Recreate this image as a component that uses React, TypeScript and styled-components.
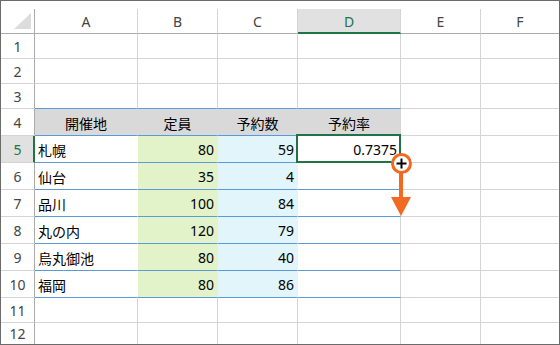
import { Fragment } from "react"
import styled, { createGlobalStyle } from "styled-components"

const GlobalStyle = createGlobalStyle`
	html, body {
		margin: 0;
		padding: 0;
		background: #ffffff;
		overflow: hidden;
	}
	* {
		box-sizing: border-box;
	}
`

const GRID = "#d4d4d4"
const HEAD_LINE = "#ababab"
const TABLE_LINE = "#5b9bd5"
const EXCEL_GREEN = "#217346"
const ORANGE = "#f26a22"

const Frame = styled.div`
	position: relative;
	width: 560px;
	height: 345px;
	border: 1px solid #6b6b6b;
	background: #ffffff;
	font-family: "Noto Sans", "Noto Sans CJK JP", sans-serif;
	font-size: 14px;
	color: #000000;
`

const Sheet = styled.div`
	display: grid;
	grid-template-columns: 34px 103px 80px 80px 103px 80px 78px;
	grid-template-rows: 8px 25px 25px 25px 25px repeat(7, 27px) 25px 21px;
`

const Spacer = styled.div`
	grid-column: 1 / -1;
`

const Corner = styled.div`
	display: flex;
	align-items: flex-end;
	justify-content: flex-end;
	padding: 0 3px 4px 0;
	border-right: 1px solid ${HEAD_LINE};
	border-bottom: 1px solid ${HEAD_LINE};
`

const CornerMark = styled.div`
	width: 17px;
	height: 16px;
	background: #dcdcdc;
	clip-path: polygon(100% 0, 100% 100%, 0 100%);
`

const ColHead = styled.div<{ $active?: boolean; $last?: boolean }>`
	display: flex;
	align-items: center;
	justify-content: center;
	color: ${(p) => (p.$active ? EXCEL_GREEN : "#444444")};
	background: ${(p) => (p.$active ? "#e1e1e1" : "#ffffff")};
	border-right: ${(p) => (p.$last ? "none" : `1px solid ${GRID}`)};
	border-bottom: ${(p) =>
		p.$active ? `2px solid ${EXCEL_GREEN}` : `1px solid ${HEAD_LINE}`};
	padding-top: ${(p) => (p.$active ? "1px" : "0")};
`

const RowHead = styled.div<{ $active?: boolean; $last?: boolean }>`
	display: flex;
	align-items: center;
	justify-content: center;
	color: ${(p) => (p.$active ? EXCEL_GREEN : "#444444")};
	background: ${(p) => (p.$active ? "#e1e1e1" : "#ffffff")};
	border-right: ${(p) =>
		p.$active ? `2px solid ${EXCEL_GREEN}` : `1px solid ${HEAD_LINE}`};
	border-bottom: ${(p) => (p.$last ? "none" : `1px solid ${GRID}`)};
	padding-left: ${(p) => (p.$active ? "1px" : "0")};
`

type Align = "left" | "center" | "right"

const justify: Record<Align, string> = {
	left: "flex-start",
	center: "center",
	right: "flex-end",
}

const Cell = styled.div<{
	$bg: string
	$right: string
	$bottom: string
	$align: Align
}>`
	position: relative;
	display: flex;
	align-items: center;
	justify-content: ${(p) => justify[p.$align]};
	padding: 1px 3px 0 3px;
	background: ${(p) => p.$bg};
	border-right: 1px solid ${(p) => p.$right};
	border-bottom: ${(p) => (p.$bottom === "none" ? "none" : `1px solid ${p.$bottom}`)};
	white-space: nowrap;
`

// active cell outline, drawn over the neighbouring grid lines
const Selection = styled.div`
	position: absolute;
	top: -2px;
	left: -2px;
	right: -1px;
	bottom: -1px;
	border: 2px solid ${EXCEL_GREEN};
	z-index: 1;
	pointer-events: none;
`

const Pointer = styled.svg`
	position: absolute;
	left: 387px;
	top: 149px;
	z-index: 2;
`

type Row = (string | number)[]

const columns = ["A", "B", "C", "D", "E", "F"]

const table: Row[] = [
	["開催地", "定員", "予約数", "予約率"],
	["札幌", 80, 59, "0.7375"],
	["仙台", 35, 4, ""],
	["品川", 100, 84, ""],
	["丸の内", 120, 79, ""],
	["烏丸御池", 80, 40, ""],
	["福岡", 80, 86, ""],
]

const fills = ["#ffffff", "#e2f2c9", "#e1f5fb", "#ffffff"]

function cellStyle(row: number, col: number) {
	const lastRow = row === 12
	const inTable = row >= 4 && row <= 10 && col < 4
	const aboveTable = row === 3 && col < 4
	let bg = "#ffffff"
	if (inTable) {
		bg = row === 4 ? "#d9d9d9" : fills[col]
	}
	const right = col === 5 ? bg : inTable && col < 3 ? bg : GRID
	const bottom = lastRow ? "none" : inTable || aboveTable ? TABLE_LINE : GRID
	return { bg, right, bottom }
}

function alignFor(row: number, col: number): Align {
	if (row === 4) return "center"
	return col === 0 ? "left" : "right"
}

export default function App() {
	const rows = Array.from({ length: 12 }, (_, i) => i + 1)

	return (
		<>
			<GlobalStyle />
			<Frame>
				<Sheet>
					<Spacer />
					<Corner>
						<CornerMark />
					</Corner>
					{columns.map((c, i) => (
						<ColHead key={c} $active={c === "D"} $last={i === columns.length - 1}>
							{c}
						</ColHead>
					))}
					{rows.map((r) => (
						<Fragment key={r}>
							<RowHead $active={r === 5} $last={r === 12}>
								{r}
							</RowHead>
							{columns.map((c, ci) => {
								const data = r >= 4 && r <= 10 ? table[r - 4] : null
								const value = data && ci < 4 ? data[ci] : ""
								const { bg, right, bottom } = cellStyle(r, ci)
								return (
									<Cell
										key={`${c}${r}`}
										$bg={bg}
										$right={right}
										$bottom={bottom}
										$align={alignFor(r, ci)}
									>
										{value}
										{r === 5 && c === "D" && <Selection />}
									</Cell>
								)
							})}
						</Fragment>
					))}
				</Sheet>
				<Pointer width="28" height="70" viewBox="0 0 28 70">
					<rect x="11" y="21" width="4" height="27" fill={ORANGE} />
					<polygon points="3,47 23,47 13,66" fill={ORANGE} />
					<circle cx="13.5" cy="13.5" r="9" fill="#ffffff" stroke={ORANGE} strokeWidth="3" />
					<path d="M13.5 8 V19 M8 13.5 H19" stroke="#ffffff" strokeWidth="4" />
					<path d="M13.5 8.5 V18.5 M8.5 13.5 H18.5" stroke="#000000" strokeWidth="2" />
				</Pointer>
			</Frame>
		</>
	)
}
